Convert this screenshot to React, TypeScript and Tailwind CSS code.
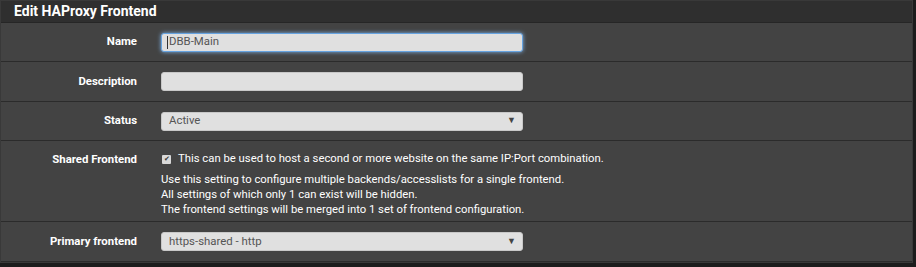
import React from 'react';

const font = { fontFamily: 'Roboto, "Liberation Sans", sans-serif' };

function Row({ label, children, top = false, h }: { label: string; children: React.ReactNode; top?: boolean; h: string }) {
  return (
    <div className={`flex ${top ? 'items-start pt-[10px]' : 'items-center'} ${h} border-b border-[#2b2b2b] bg-[#434343]`}>
      <div className={`w-[136px] shrink-0 text-right text-[11.4px] font-bold text-white ${top ? 'leading-[17px]' : ''}`}>{label}</div>
      <div className="pl-[24px]">{children}</div>
    </div>
  );
}

function Select({ value }: { value: string }) {
  return (
    <div className="flex h-[19px] w-[362px] items-center justify-between rounded-[3px] border border-[#c8c8c8] bg-[#e0e0e0] pl-[7px] pr-[6px] text-[11.4px] text-[#555]">
      <span>{value}</span>
      <span className="text-[9px] text-[#444]">▼</span>
    </div>
  );
}

export default function App() {
  return (
    <div className="h-[267px] w-[916px] bg-[#1c1c1c]" style={font}>
      <div className="w-[913px] border border-[#393939] bg-[#434343]">
        <div className="flex h-[22px] items-center border-b border-[#262626] bg-[#2f2f2f] px-[13px] text-[14px] font-bold text-white">
          Edit HAProxy Frontend
        </div>

        <Row label="Name" h="h-[39px]">
          <div className="flex h-[19px] w-[362px] items-center rounded-[3px] border border-[#66a3e0] bg-[#e0e0e0] pl-[5px] text-[11.4px] text-[#555] shadow-[0_0_4px_#7fb2e6]">
            <span className="mr-[1px] h-[13px] w-px bg-[#333]"></span>
            DBB-Main
          </div>
        </Row>

        <Row label="Description" h="h-[40px]">
          <div className="h-[19px] w-[362px] rounded-[3px] border border-[#c8c8c8] bg-[#e0e0e0]"></div>
        </Row>

        <Row label="Status" h="h-[39px]">
          <Select value="Active" />
        </Row>

        <Row label="Shared Frontend" top h="h-[81px]">
          <div className="text-[11.3px] text-white">
            <div className="flex h-[17px] items-center">
              <span className="mr-[7px] ml-[1px] flex h-[9px] w-[9px] items-center justify-center rounded-[1px] bg-[#d8d8d8] text-[7px] leading-none text-[#333]">✔</span>
              This can be used to host a second or more website on the same IP:Port combination.
            </div>
            <div className="mt-[4px] leading-[15px]">
              <div>Use this setting to configure multiple backends/accesslists for a single frontend.</div>
              <div>All settings of which only 1 can exist will be hidden.</div>
              <div>The frontend settings will be merged into 1 set of frontend configuration.</div>
            </div>
          </div>
        </Row>

        <Row label="Primary frontend" h="h-[40px]">
          <Select value="https-shared - http" />
        </Row>
      </div>
    </div>
  );
}
